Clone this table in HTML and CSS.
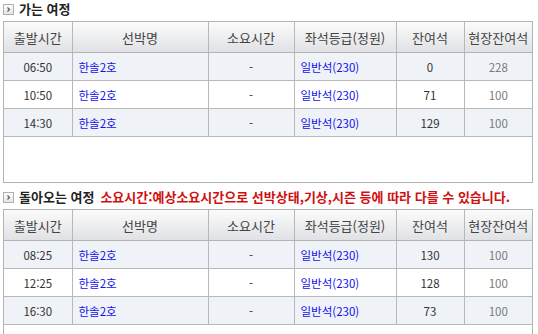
FILE: index.html
```html
<!DOCTYPE html>
<html lang="ko">
<head>
<meta charset="utf-8">
<link rel="stylesheet" href="styles.css">
</head>
<body>
<div class="page">
  <h3 class="title">
    <svg class="ico" width="11" height="11" viewBox="0 0 11 11"><defs><linearGradient id="g1" x1="0" y1="0" x2="0" y2="1"><stop offset="0" stop-color="#ffffff"/><stop offset="1" stop-color="#e4e4e4"/></linearGradient></defs><rect x="0.5" y="0.5" width="10" height="10" fill="url(#g1)" stroke="#b0b0b0"/><path d="M4.5 3.5 L6.5 5.5 L4.5 7.5" fill="none" stroke="#555" stroke-width="1.1"/></svg>
    <span>가는 여정</span>
  </h3>
  <div class="box">
    <table class="grid">
      <colgroup><col class="c1"><col class="c2"><col class="c3"><col class="c4"><col class="c5"><col class="c6"></colgroup>
      <thead><tr><th>출발시간</th><th>선박명</th><th>소요시간</th><th>좌석등급(정원)</th><th>잔여석</th><th>현장잔여석</th></tr></thead>
      <tbody>
        <tr class="odd"><td class="ctr">06:50</td><td class="lnk">한솔2호</td><td class="ctr">-</td><td class="lnk">일반석(230)</td><td class="ctr">0</td><td class="ctr gray">228</td></tr>
        <tr><td class="ctr">10:50</td><td class="lnk">한솔2호</td><td class="ctr">-</td><td class="lnk">일반석(230)</td><td class="ctr">71</td><td class="ctr gray">100</td></tr>
        <tr class="odd"><td class="ctr">14:30</td><td class="lnk">한솔2호</td><td class="ctr">-</td><td class="lnk">일반석(230)</td><td class="ctr">129</td><td class="ctr gray">100</td></tr>
      </tbody>
    </table>
  </div>

  <h3 class="title second">
    <svg class="ico" width="11" height="11" viewBox="0 0 11 11"><defs><linearGradient id="g2" x1="0" y1="0" x2="0" y2="1"><stop offset="0" stop-color="#ffffff"/><stop offset="1" stop-color="#e4e4e4"/></linearGradient></defs><rect x="0.5" y="0.5" width="10" height="10" fill="url(#g2)" stroke="#b0b0b0"/><path d="M4.5 3.5 L6.5 5.5 L4.5 7.5" fill="none" stroke="#555" stroke-width="1.1"/></svg>
    <span>돌아오는 여정</span>
    <span class="notice">소요시간:예상소요시간으로 선박상태,기상,시즌 등에 따라 다를 수 있습니다.</span>
  </h3>
  <div class="box">
    <table class="grid">
      <colgroup><col class="c1"><col class="c2"><col class="c3"><col class="c4"><col class="c5"><col class="c6"></colgroup>
      <thead><tr><th>출발시간</th><th>선박명</th><th>소요시간</th><th>좌석등급(정원)</th><th>잔여석</th><th>현장잔여석</th></tr></thead>
      <tbody>
        <tr class="odd"><td class="ctr">08:25</td><td class="lnk">한솔2호</td><td class="ctr">-</td><td class="lnk">일반석(230)</td><td class="ctr">130</td><td class="ctr gray">100</td></tr>
        <tr><td class="ctr">12:25</td><td class="lnk">한솔2호</td><td class="ctr">-</td><td class="lnk">일반석(230)</td><td class="ctr">128</td><td class="ctr gray">100</td></tr>
        <tr class="odd"><td class="ctr">16:30</td><td class="lnk">한솔2호</td><td class="ctr">-</td><td class="lnk">일반석(230)</td><td class="ctr">73</td><td class="ctr gray">100</td></tr>
      </tbody>
    </table>
  </div>
</div>
</body>
</html>
```

FILE: styles.css
```css
html, body {
  margin: 0;
  padding: 0;
  background: #ffffff;
}
body {
  font-family: "Noto Sans CJK KR", "Noto Sans", sans-serif;
  color: #333333;
}
.page {
  padding: 0 5px 0 3px;
}
.title {
  display: flex;
  align-items: center;
  gap: 5px;
  height: 18px;
  margin: 0 0 3px 0;
  font-size: 13px;
  font-weight: bold;
  color: #222222;
  line-height: 18px;
}
.title.second {
  margin-top: 5px;
}
.ico {
  display: block;
  flex: none;
}
.notice {
  color: #d01010;
  margin-left: 1px;
}
.box {
  border: 1px solid #b3b3b3;
  height: 160px;
  overflow: hidden;
}
.grid {
  width: 100%;
  border-collapse: collapse;
  table-layout: fixed;
  font-size: 11.5px;
}
.c1 { width: 68px; }
.c2 { width: 136px; }
.c3 { width: 86px; }
.c4 { width: 102px; }
.c5 { width: 68px; }
.c6 { width: auto; }
.grid th {
  height: 30px;
  padding: 0;
  font-size: 13px;
  font-weight: normal;
  color: #444444;
  background: linear-gradient(#fbfbfb, #dfe1e4);
  border-right: 1px solid #b8b8b8;
  border-bottom: 1px solid #b3b3b3;
  text-align: center;
  white-space: nowrap;
}
.grid td {
  height: 27px;
  padding: 0;
  border-right: 1px solid #b8b8b8;
  border-bottom: 1px solid #b8b8b8;
  color: #333333;
  white-space: nowrap;
}
.grid th:last-child, .grid td:last-child {
  border-right: none;
}
.grid tr.odd td {
  background: #eff2f7;
}
.ctr {
  text-align: center;
}
.lnk {
  padding-left: 6px !important;
  color: #1010ee !important;
}
.gray {
  color: #7a7a7a !important;
}
```
